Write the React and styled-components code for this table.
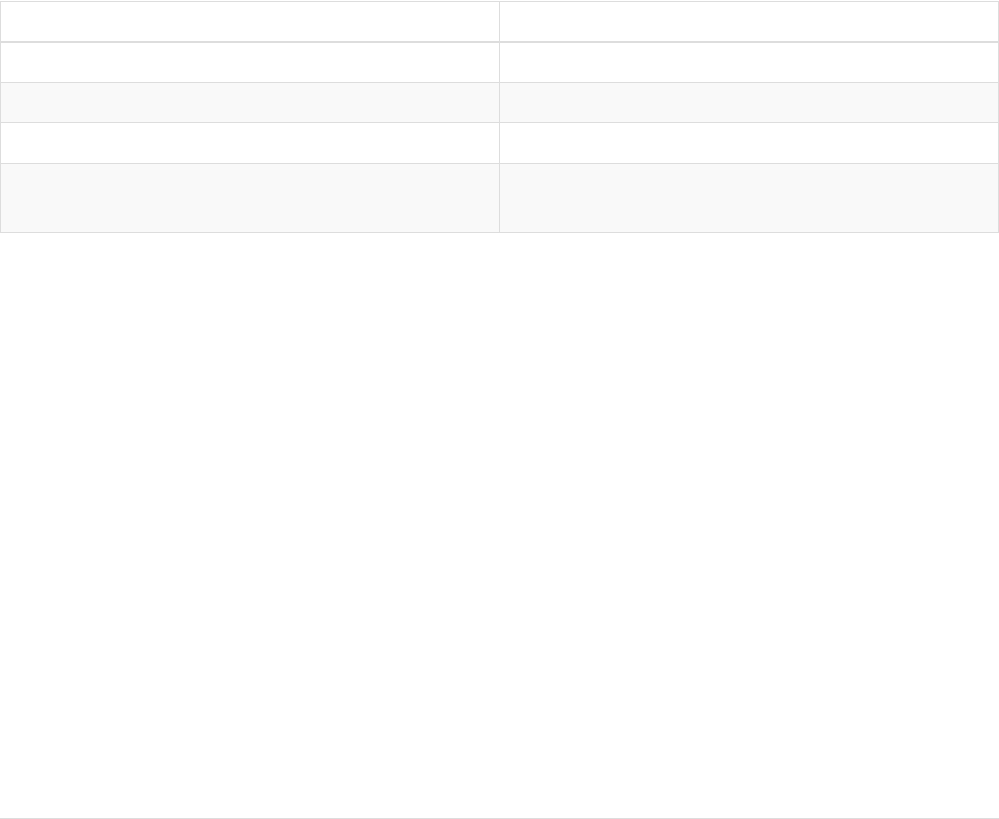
import React from "react";
import styled, { createGlobalStyle } from "styled-components";

const Global = createGlobalStyle`
  html, body { margin: 0; padding: 0; background: #fff; }
  body { font-family: "Liberation Sans", Arial, sans-serif; font-size: 14px; color: #333; }
  * { box-sizing: border-box; }
`;

const Page = styled.div`
  min-height: 819px;
  padding-top: 1px;
  border-bottom: 1px solid #dddddd;
`;

const Table = styled.table`
  width: 999px;
  border-collapse: collapse;
  border-spacing: 0;
  border: 1px solid #dddddd;
  table-layout: fixed;
`;

const HeadCell = styled.th`
  height: 40px;
  padding: 8px;
  border: 1px solid #dddddd;
  border-bottom: 2px solid #dddddd;
  text-align: left;
  font-weight: bold;
`;

const Row = styled.tr`
  background: ${(p) => (p.$striped ? "#f9f9f9" : "#ffffff")};
`;

const Cell = styled.td`
  height: ${(p) => (p.$tall ? "69px" : "40.7px")};
  padding: 8px;
  border: 1px solid #dddddd;
  vertical-align: top;
`;

const rows = [
  { striped: false, tall: false },
  { striped: true, tall: false },
  { striped: false, tall: false },
  { striped: true, tall: true },
];

export default function App() {
  return (
    <>
      <Global />
      <Page>
        <Table>
          <thead>
            <tr>
              <HeadCell />
              <HeadCell />
            </tr>
          </thead>
          <tbody>
            {rows.map((r, i) => (
              <Row key={i} $striped={r.striped}>
                <Cell $tall={r.tall} />
                <Cell $tall={r.tall} />
              </Row>
            ))}
          </tbody>
        </Table>
      </Page>
    </>
  );
}
